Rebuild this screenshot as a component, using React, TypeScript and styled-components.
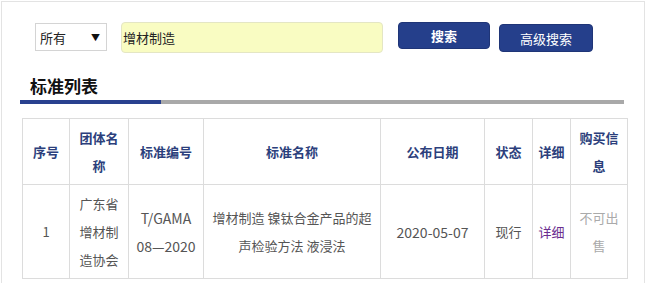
import styled, { createGlobalStyle } from 'styled-components';

const GlobalStyle = createGlobalStyle`
  body {
    margin: 0;
    background: #ffffff;
    font-family: "Noto Sans CJK SC", "Noto Sans", sans-serif;
  }
`;

const columns = [47, 59, 75, 177, 104, 48, 38, 57];

export default function App() {
  return (
    <>
      <GlobalStyle />
      <Frame>
        <SearchRow>
          <SelectBox>
            <span>所有</span>
            <Arrow>▼</Arrow>
          </SelectBox>
          <KeywordInput defaultValue="增材制造" />
          <Button $bold>搜索</Button>
          <Button $wide $offset={2}>高级搜索</Button>
        </SearchRow>

        <SectionTitle>标准列表</SectionTitle>
        <TitleBar>
          <TitleBarAccent />
        </TitleBar>

        <Table>
          <colgroup>
            {columns.map((w, i) => (
              <col key={i} style={{ width: w }} />
            ))}
          </colgroup>
          <thead>
            <tr>
              <Th>序号</Th>
              <Th>团体名称</Th>
              <Th>标准编号</Th>
              <Th>标准名称</Th>
              <Th>公布日期</Th>
              <Th>状态</Th>
              <Th>详细</Th>
              <Th>购买信息</Th>
            </tr>
          </thead>
          <tbody>
            <tr>
              <Td>1</Td>
              <Td>广东省增材制造协会</Td>
              <Td $latin>T/GAMA 08—2020</Td>
              <Td>增材制造 镍钛合金产品的超声检验方法 液浸法</Td>
              <Td $latin>2020-05-07</Td>
              <Td>现行</Td>
              <Td>
                <DetailLink href="#">详细</DetailLink>
              </Td>
              <Td $muted>不可出售</Td>
            </tr>
          </tbody>
        </Table>
      </Frame>
    </>
  );
}

const Frame = styled.div`
  margin: 1px 0 0 1px;
  width: 642px;
  min-height: 300px;
  border: 1px solid #e3e3e3;
  border-bottom: none;
  box-sizing: content-box;
`;

const SearchRow = styled.div`
  display: flex;
  align-items: flex-start;
  padding: 20px 0 0 33px;
`;

const SelectBox = styled.div`
  margin-top: 1px;
  width: 72px;
  height: 28px;
  box-sizing: border-box;
  border: 1px solid #d4d4d4;
  display: flex;
  align-items: center;
  justify-content: space-between;
  padding: 0 6px 0 4px;
  font-size: 13px;
  color: #222;
`;

const Arrow = styled.span`
  font-size: 9px;
  color: #111;
`;

const KeywordInput = styled.input`
  margin-left: 14px;
  width: 262px;
  height: 31px;
  box-sizing: border-box;
  border: 1px solid #e4e6c4;
  border-radius: 4px;
  background: #f9fcc2;
  padding: 0 0 0 1px;
  font-family: "Noto Sans CJK SC", sans-serif;
  font-size: 13px;
  color: #222;
  outline: none;
`;

const Button = styled.button<{ $bold?: boolean; $wide?: boolean; $offset?: number }>`
  margin-top: ${(p) => p.$offset ?? 0}px;
  margin-left: ${(p) => (p.$wide ? 9 : 15)}px;
  width: ${(p) => (p.$wide ? 94 : 92)}px;
  height: ${(p) => (p.$wide ? 28 : 27)}px;
  border: 1px solid #1f3577;
  border-radius: 4px;
  background: #253f8b;
  color: #ffffff;
  font-family: "Noto Sans CJK SC", sans-serif;
  font-size: 13px;
  font-weight: ${(p) => (p.$bold ? 700 : 400)};
  padding: 0;
`;

const SectionTitle = styled.h2`
  margin: 21px 0 0 28px;
  font-size: 17px;
  line-height: 24px;
  font-weight: 700;
  color: #111;
`;

const TitleBar = styled.div`
  margin: 2px 0 0 18px;
  width: 604px;
  height: 4px;
  background: #a9a9a9;
`;

const TitleBarAccent = styled.div`
  width: 141px;
  height: 100%;
  background: #29418f;
`;

const Table = styled.table`
  margin: 14px 0 0 20px;
  width: 605px;
  table-layout: fixed;
  border-collapse: collapse;
  border: 1px solid #dcdcdc;
`;

const Th = styled.th`
  border: 1px solid #dcdcdc;
  padding: 5px 4px 4px;
  line-height: 28px;
  font-size: 13px;
  font-weight: 700;
  color: #2c3f7c;
  text-align: center;
  vertical-align: middle;
`;

const Td = styled.td<{ $muted?: boolean; $latin?: boolean }>`
  border: 1px solid #dcdcdc;
  padding: 5px 4px 4px;
  line-height: 28px;
  font-size: ${(p) => (p.$latin ? 14 : 13)}px;
  color: ${(p) => (p.$muted ? '#aaaaaa' : '#555555')};
  text-align: center;
  vertical-align: middle;
`;

const DetailLink = styled.a`
  color: #6a2d8f;
  text-decoration: none;
`;
